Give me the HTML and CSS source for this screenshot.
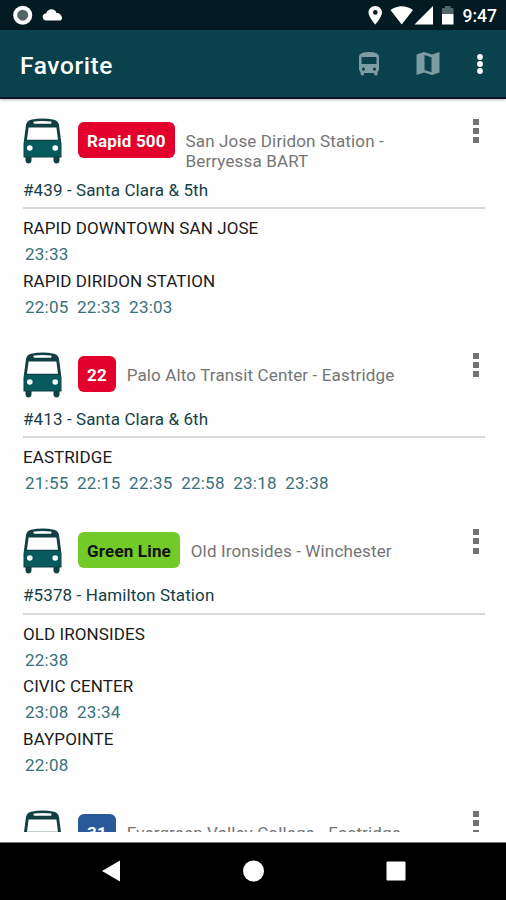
FILE: index.html
```html
<!DOCTYPE html>
<html lang="en">
<head>
<meta charset="utf-8">
<title>Favorite</title>
<link rel="stylesheet" href="styles.css">
</head>
<body>
<svg class="defs" width="0" height="0">
  <symbol id="bus" viewBox="0 0 39 46">
    <path fill="#123f42" fill-rule="evenodd" d="M8 1.800Q19.500 -.8 31 1.800Q35.500 3 36 7L38.500 26V39.500H36.500V43Q36 45.500 33.500 45.500Q31 45.500 30.500 43V39.500H8.500V43Q8 45.500 5.500 45.500Q3 45.500 2.500 43V39.500H.5V26L3 7Q3.500 3 8 1.800ZM5.600 9.500L4 21.800H35L33.400 9.500ZM11 3.600Q9.500 5.200 11.500 5.800H27.500Q29.500 5.200 28 3.600Q19.500 2.400 11 3.600Z"/>
    <path fill="#075b5c" d="M1.500 23H37.500V38.500H1.500Z"/>
    <circle cx="6.800" cy="30" r="2.800" fill="#fff"/><circle cx="32.200" cy="30" r="2.800" fill="#fff"/>
  </symbol>
</svg>
<header class="status">
  <svg width="506" height="30" viewBox="0 0 506 30">
    <circle cx="22.700" cy="15.200" r="9.500" fill="#fff"/><circle cx="22.700" cy="15.200" r="5.500" fill="#536566"/>
    <path fill="#fff" d="M46.500 20.500C41.500 20.500 41.500 13.500 46 13.500C48 8 55 8 56.500 13C61 12.500 64 19 60.500 20.500Z"/>
    <path fill="#fff" fill-rule="evenodd" d="M375.300 6C371.300 6 368.500 9 368.500 12.500C368.500 17 375.300 24.500 375.300 24.500S382 17 382 12.500C382 9 379.300 6 375.300 6ZM375.300 10.100A2.300 2.300 0 1 1 375.300 14.700A2.300 2.300 0 0 1 375.300 10.100Z"/>
    <path fill="#fff" d="M390.500 10Q401.700 2.500 413 10L401.700 24.500ZM433 6V24.500H414.500Z"/>
    <path fill="#53666c" d="M442 8H445V6H450.500V8H453.500V14H442Z"/><path fill="#fff" d="M442 14H453.500V24.500H442Z"/>
  </svg>
  <span class="clock">9:47</span>
</header>
<div class="toolbar">
  <h1>Favorite</h1>
  <svg class="tool-bus" width="22" height="26" viewBox="0 0 22 26"><path fill="#7e9da3" fill-rule="evenodd" d="M1 6Q1 1 11 1T21 6V18Q21 20 19.500 21V23Q19.500 24.500 18 24.500T16 23V22H6V23Q6 24.500 4.500 24.500T2.500 23V21Q1 20 1 18ZM3.500 6V13H18.500V6ZM5.500 16.500A1.600 1.600 0 1 0 5.500 19.700A1.600 1.600 0 0 0 5.500 16.500ZM16.500 16.500A1.600 1.600 0 1 0 16.500 19.700A1.600 1.600 0 0 0 16.500 16.500Z"/></svg>
  <svg class="tool-map" width="24" height="26" viewBox="0 0 24 26"><path fill="#7e9da3" fill-rule="evenodd" d="M.5 3.500L8 1L16 3.500L23.500 1V21.500L16 24L8 21.500L.5 24ZM8.500 4V19L15.500 21.300V6.300Z"/></svg>
  <svg class="tool-more" width="8" height="24" viewBox="0 0 8 24"><g fill="#fff"><circle cx="4" cy="5" r="2.900"/><circle cx="4" cy="12" r="2.900"/><circle cx="4" cy="19" r="2.900"/></g></svg>
</div>
<main class="list">
  <section class="card">
    <div class="head"><svg class="bus"><use href="#bus"/></svg><span class="badge red">Rapid 500</span><span class="route">San Jose Diridon Station -<br>Berryessa BART</span><span class="menu"><i></i><i></i><i></i></span></div>
    <div class="stop">#439 - Santa Clara &amp; 5th</div>
    <div class="dest">RAPID DOWNTOWN SAN JOSE</div>
    <div class="times"><span>23:33</span></div>
    <div class="dest">RAPID DIRIDON STATION</div>
    <div class="times"><span>22:05</span><span>22:33</span><span>23:03</span></div>
  </section>
  <section class="card">
    <div class="head"><svg class="bus"><use href="#bus"/></svg><span class="badge red">22</span><span class="route">Palo Alto Transit Center - Eastridge</span><span class="menu"><i></i><i></i><i></i></span></div>
    <div class="stop">#413 - Santa Clara &amp; 6th</div>
    <div class="dest">EASTRIDGE</div>
    <div class="times"><span>21:55</span><span>22:15</span><span>22:35</span><span>22:58</span><span>23:18</span><span>23:38</span></div>
  </section>
  <section class="card">
    <div class="head"><svg class="bus"><use href="#bus"/></svg><span class="badge green">Green Line</span><span class="route">Old Ironsides - Winchester</span><span class="menu"><i></i><i></i><i></i></span></div>
    <div class="stop">#5378 - Hamilton Station</div>
    <div class="dest">OLD IRONSIDES</div>
    <div class="times"><span>22:38</span></div>
    <div class="dest">CIVIC CENTER</div>
    <div class="times"><span>23:08</span><span>23:34</span></div>
    <div class="dest">BAYPOINTE</div>
    <div class="times"><span>22:08</span></div>
  </section>
  <section class="card">
    <div class="head"><svg class="bus"><use href="#bus"/></svg><span class="badge blue">31</span><span class="route">Evergreen Valley College - Eastridge</span><span class="menu"><i></i><i></i><i></i></span></div>
  </section>
</main>
<footer class="nav">
  <svg width="506" height="58" viewBox="0 0 506 58"><g fill="#fff"><path d="M102 28L120 17.500V38.500Z"/><circle cx="253.500" cy="28" r="10.500"/><rect x="386.500" y="18.500" width="19" height="19" rx="1"/></g></svg>
</footer>
</body>
</html>
```
FILE: styles.css
```css
* { box-sizing: border-box; }
body { margin: 0; width: 506px; height: 900px; display: flex; flex-direction: column; overflow: hidden; background: #fefefe; font-family: Roboto, sans-serif; font-size: 17px; }
svg { display: block; flex: none; }
.defs { position: absolute; }
.status { height: 30px; flex: none; background: #021a22; position: relative; }
.clock { position: absolute; right: 9px; top: 5px; color: #fff; font-size: 17.500px; font-weight: 500; line-height: 22px; }
.toolbar { height: 69px; flex: none; display: flex; align-items: center; padding: 0 22px 0 20px; background: #09414c; border-bottom: 2px solid #071332; box-shadow: 0 1px 3px #bbb; }
.toolbar h1 { flex: 1; margin: 4px 0 0; color: #fff; font-size: 24.500px; font-weight: 500; line-height: 30px; letter-spacing: .6px; }
.tool-bus { margin-right: 36px; }
.tool-map { margin-right: 36px; }
.tool-more { margin-top: 1px; }
.list { height: 732.500px; flex: none; overflow: hidden; padding: 18.500px 21px 0 23px; }
.card { padding-bottom: 31.400px; }
.head { display: flex; align-items: flex-start; min-height: 57px; }
.bus { width: 39px; height: 46px; }
.badge { flex: none; height: 36px; margin: 4px 0 0 15.500px; padding: 0 9.500px; border-radius: 6px; line-height: 38px; font-weight: 700; letter-spacing: .18px; }
.red { background: #e3002d; color: #fff; }
.green { background: #72cb29; color: #111; }
.blue { background: #27599b; color: #fff; }
.route { flex: 1; margin: 13px 0 0 10.300px; padding-bottom: 9px; color: #757575; line-height: 20px; letter-spacing: .14px; }
.menu { display: flex; flex-direction: column; gap: 3.400px; margin: 1px 6px 0 0; }
.menu i { width: 6px; height: 6px; background: #727272; }
.stop { height: 29.500px; margin-bottom: 6px; border-bottom: 2px solid #d8d8d8; color: #153e46; line-height: 20px; letter-spacing: .11px; }
.dest, .times { height: 26.300px; line-height: 26.300px; white-space: nowrap; }
.dest { color: #1b1b1b; letter-spacing: .08px; }
.times { display: flex; gap: 8.500px; padding-left: 2px; color: #39717b; letter-spacing: .24px; }
.nav { flex: none; height: 58.500px; margin-top: auto; border-top: 1px solid #777; background: #000; }
```
